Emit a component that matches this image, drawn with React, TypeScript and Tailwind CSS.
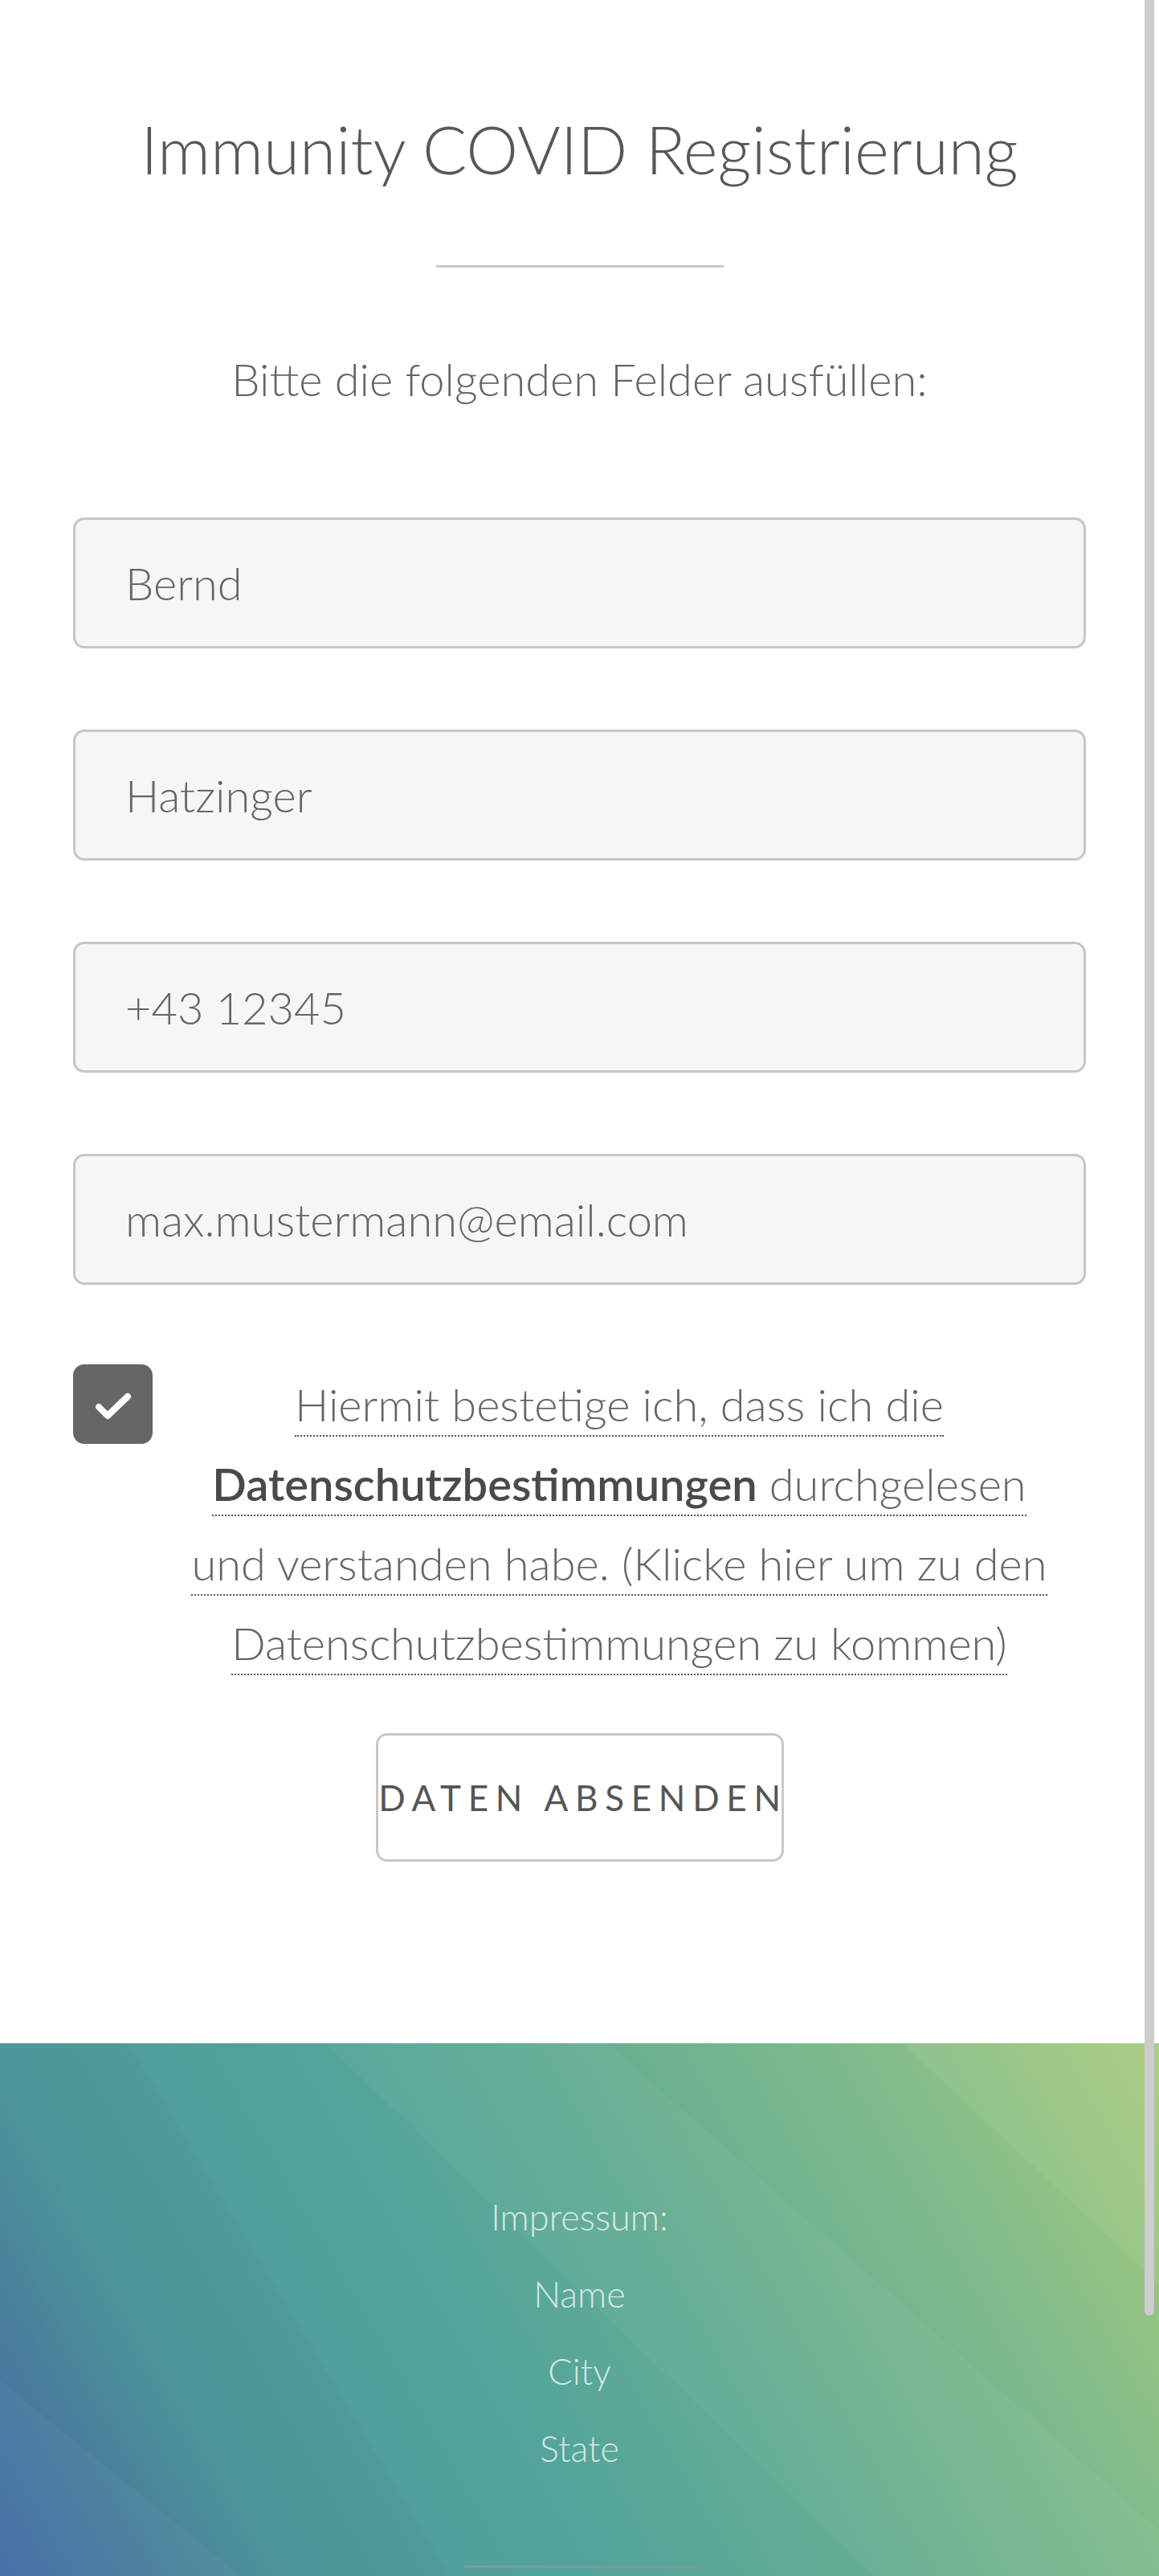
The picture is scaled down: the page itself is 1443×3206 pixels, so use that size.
import React from "react";

const fields = ["Bernd", "Hatzinger", "+43 12345", "max.mustermann@email.com"];
const footerLines = ["Impressum:", "Name", "City", "State"];

export default function App() {
  return (
    <div className="relative bg-white font-['Lato','Noto_Sans',sans-serif] text-[#666]">
      {/* overlay scrollbar thumb */}
      <div className="absolute right-[6px] top-0 z-10 h-[2882px] w-[12px] rounded-b-[6px] bg-[#cdcdcd]" />

      <main className="flex flex-col items-center px-[91px] pt-[144px] pb-[226px]">
        <h1 className="whitespace-nowrap text-center text-[82px] font-light leading-none text-[#585858]">
          Immunity COVID Registrierung
        </h1>
        <div className="mt-[104px] h-[3px] w-[358px] bg-[#c8c8c8]" />
        <p className="mt-[111px] whitespace-nowrap text-center text-[56px] font-light leading-none text-[#666]">
          Bitte die folgenden Felder ausfüllen:
        </p>

        <form className="mt-[144px] flex w-full flex-col" onSubmit={(e) => e.preventDefault()}>
          <div className="flex flex-col gap-[101px]">
            {fields.map((f) => (
              <input
                key={f}
                type="text"
                defaultValue={f}
                className="h-[163px] w-full rounded-[14px] border-[3px] border-[#c6c6c6] bg-[#f6f6f6] pl-[62px] text-[56px] font-light text-[#666] outline-none"
              />
            ))}
          </div>

          <div className="mt-[99px] flex items-start">
            <div className="flex h-[99px] w-[99px] shrink-0 items-center justify-center rounded-[14px] bg-[#666]">
              <svg width="48" height="36" viewBox="0 0 48 36" className="mt-[4px]">
                <polyline
                  points="6,19 17,30 42,6"
                  fill="none"
                  stroke="#ffffff"
                  strokeWidth="8"
                  strokeLinecap="round"
                  strokeLinejoin="round"
                />
              </svg>
            </div>
            <p className="flex-1 text-center text-[56px] font-light leading-[99px] text-[#666]">
              <a href="#" className="border-b-2 border-dotted border-[#555] pb-[5px]">
                Hiermit bestetige ich, dass ich die
                <br />
                <strong className="font-semibold text-[#4a4a4a]">Datenschutzbestimmungen</strong> durchgelesen
                <br />
                und verstanden habe. (Klicke hier um zu den
                <br />
                Datenschutzbestimmungen zu kommen)
              </a>
            </p>
          </div>

          <button
            type="submit"
            className="mx-auto mt-[63px] flex h-[160px] w-[508px] items-center justify-center whitespace-nowrap rounded-[14px] border-[3px] border-[#c8c8c8] bg-white pl-[9px] text-[44px] font-normal uppercase tracking-[8.7px] text-[#555]"
          >
            Daten absenden
          </button>
        </form>
      </main>

      <footer className="relative h-[663px] overflow-hidden bg-[linear-gradient(60deg,#4570aa_0%,#4a80a0_10%,#4f9b9c_21%,#52a39c_40%,#64ae92_60%,#80bb8c_79%,#95c482_90%,#a8cc7e_100%)]">
        <svg className="absolute inset-0" width="1443" height="663" viewBox="0 0 1443 663" preserveAspectRatio="none">
          <polygon points="405,0 756,0 1443,606 1443,663 1088,663" fill="#ffffff" fillOpacity="0.035" />
          <polygon points="1124,0 1443,0 1443,300" fill="#ffffff" fillOpacity="0.05" />
          <polygon points="0,0 160,0 560,663 0,663" fill="#000000" fillOpacity="0.02" />
          <polygon points="0,420 300,663 0,663" fill="#ffffff" fillOpacity="0.03" />
        </svg>
        <div className="relative flex flex-col items-center pt-[168px]">
          {footerLines.map((l) => (
            <p key={l} className="text-[45px] font-light leading-[96px] text-white/75">
              {l}
            </p>
          ))}
          <div className="mt-[98px] h-[3px] w-[288px] bg-[#7f9a9b]" />
        </div>
      </footer>
    </div>
  );
}
